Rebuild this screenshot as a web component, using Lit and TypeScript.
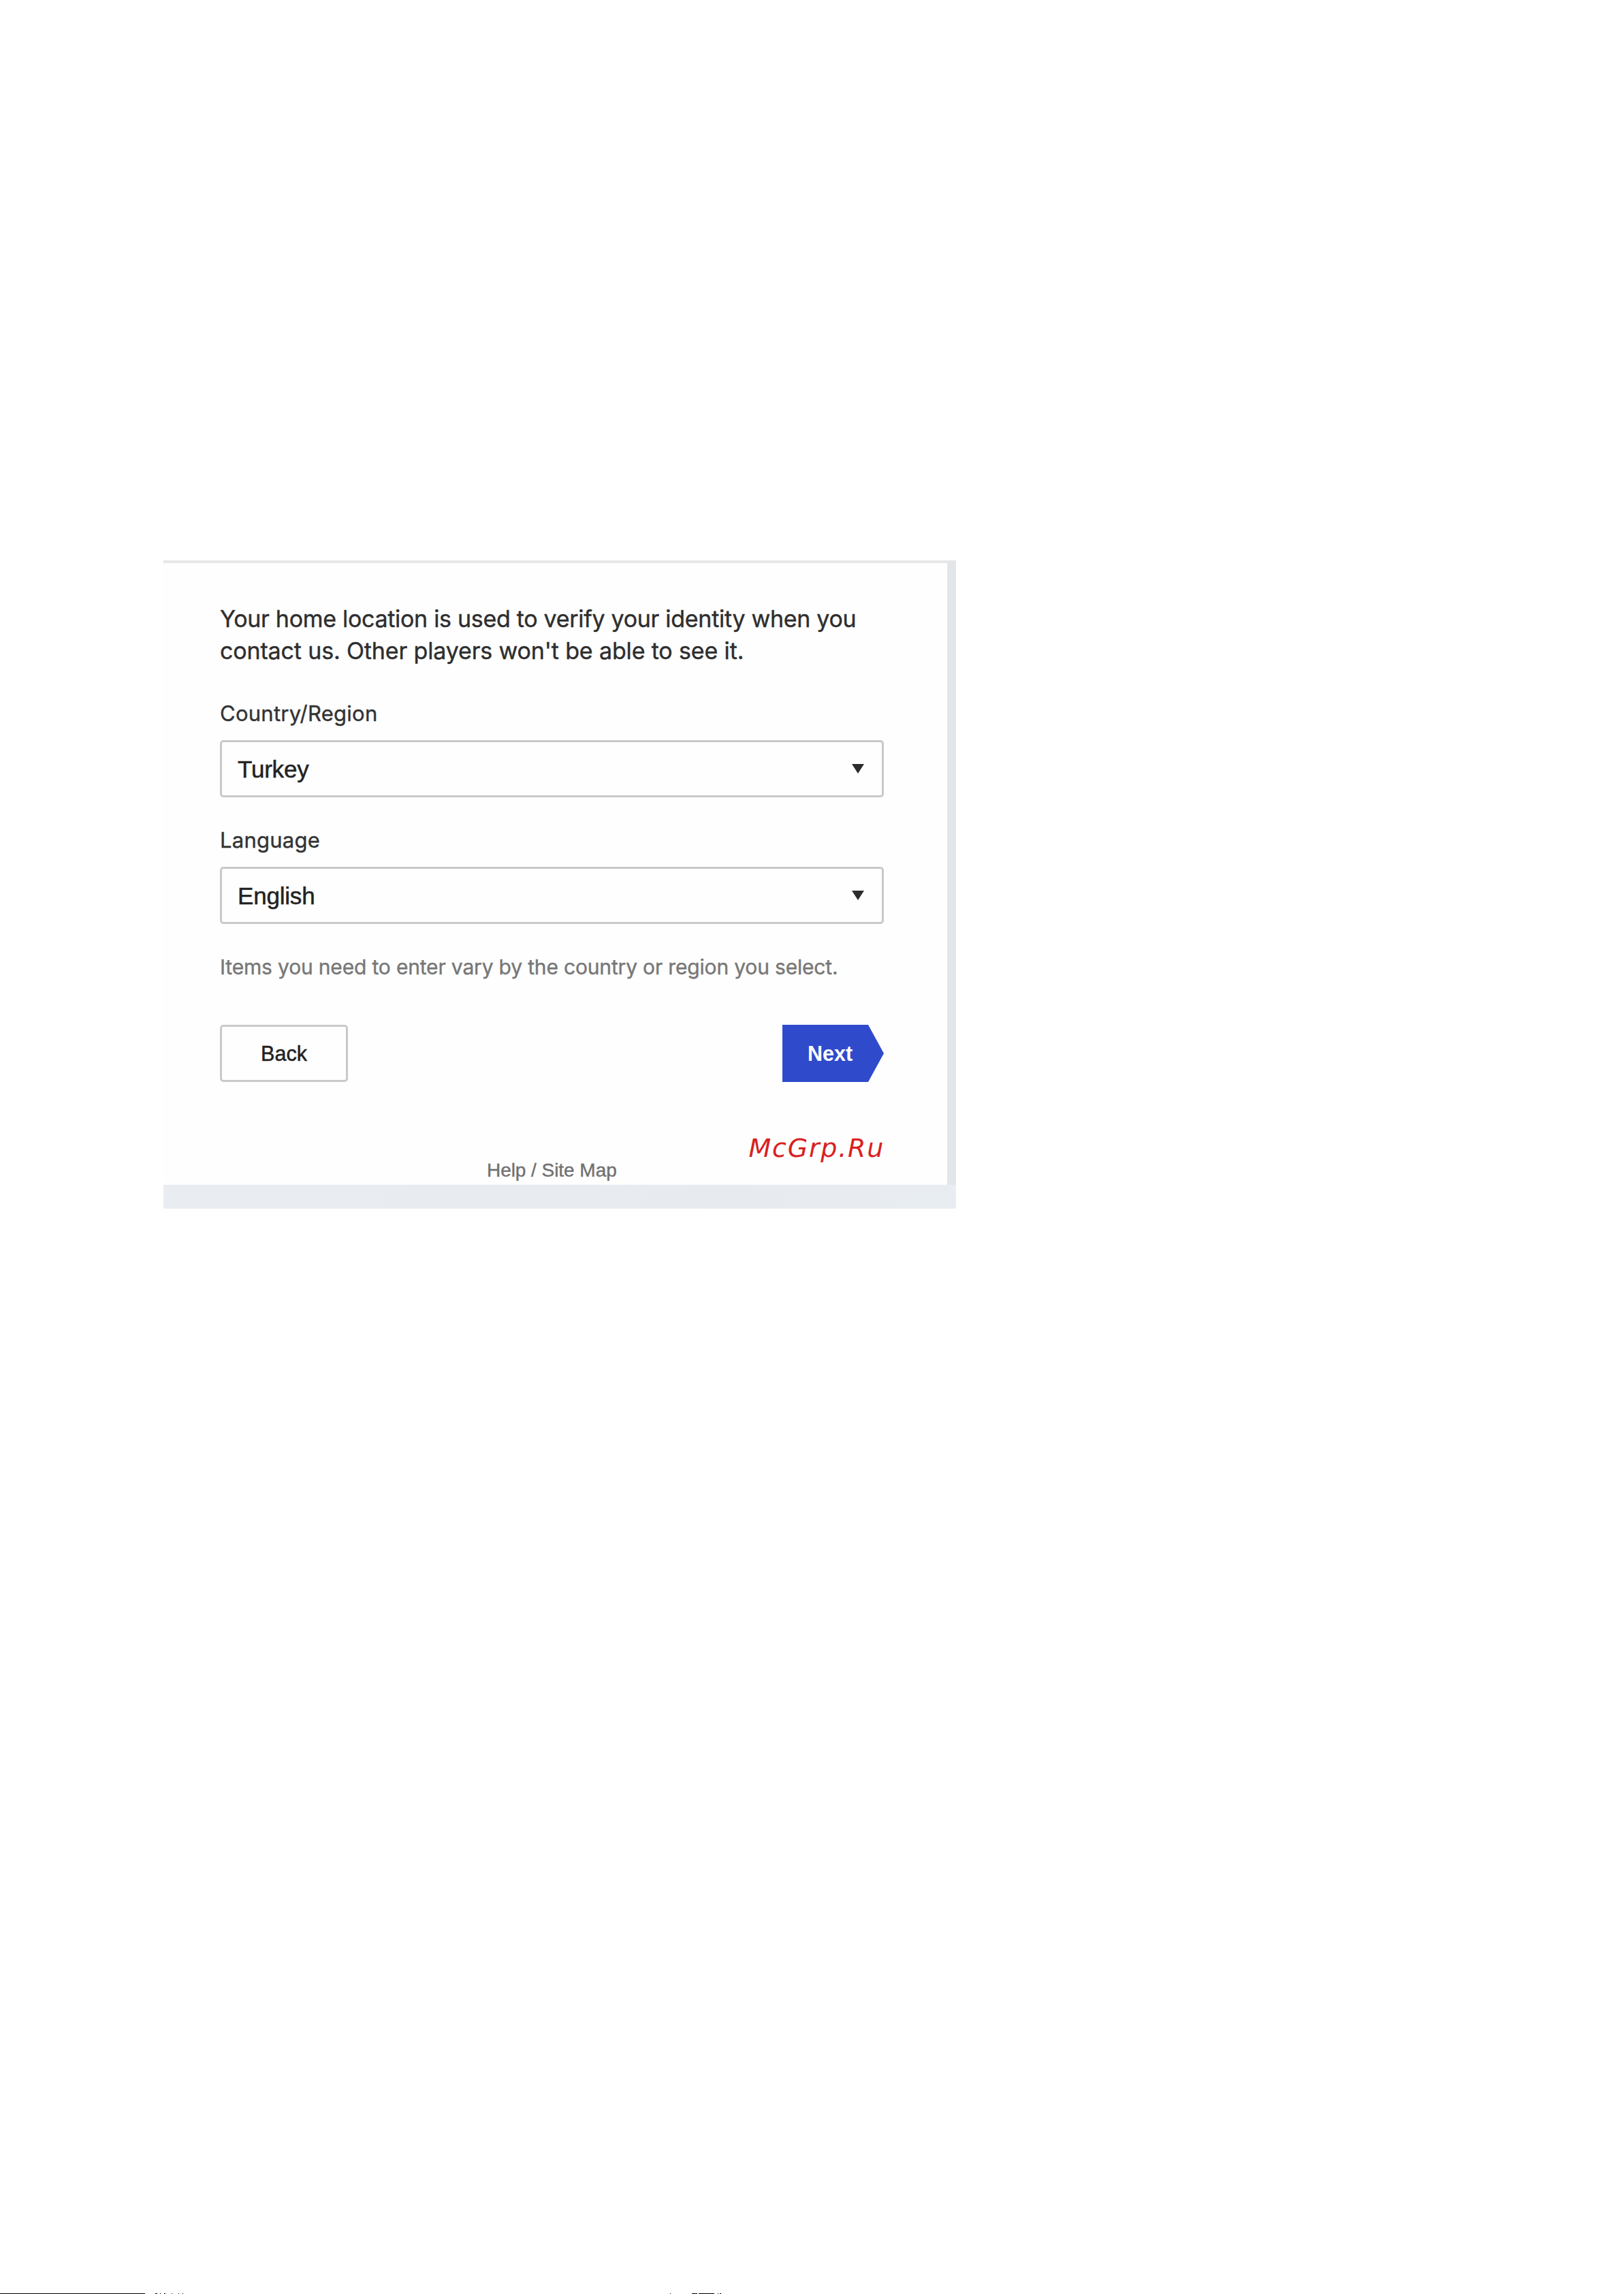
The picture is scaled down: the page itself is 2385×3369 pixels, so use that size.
import { LitElement, html, css } from 'lit';
import { customElement, property } from 'lit/decorators.js';

@customElement('select-field')
export class SelectField extends LitElement {
  @property() label = '';
  @property() value = '';

  static styles = css`
    :host {
      display: block;
    }

    .label {
      color: #333;
      font: 31px/40px Inter, sans-serif;
      letter-spacing: 0.25px;
      -webkit-text-stroke: 0.4px #333;
    }

    .select {
      display: flex;
      align-items: center;
      justify-content: space-between;
      box-sizing: border-box;
      height: 84px;
      margin-top: 19px;
      padding: 0 26px 0 23px;
      border: 3px solid #c9c9c9;
      border-radius: 5px;
      color: #222;
      font: 35px/40px 'Liberation Sans', Arial, sans-serif;
      letter-spacing: -0.2px;
      -webkit-text-stroke: 0.5px #222;
    }

    .value {
      padding-top: 2px;
    }

    .arrow {
      display: block;
      width: 18px;
      height: 14px;
      fill: #2c2c2c;
      stroke: none;
    }
  `;

  render() {
    return html`
      <div class="label">${this.label}</div>
      <div class="select">
        <span class="value">${this.value}</span>
        <svg class="arrow" viewBox="0 0 18 14"><path d="M0 0h18L9 14z" /></svg>
      </div>
    `;
  }
}

@customElement('app-root')
export class AppRoot extends LitElement {
  static styles = css`
    :host {
      display: flex;
      flex-direction: column;
      justify-content: space-between;
      box-sizing: border-box;
      height: 3369px;
      padding-top: 823px;
      background: #fff;
      overflow: hidden;
    }

    .panel {
      position: relative;
      box-sizing: border-box;
      width: 1164px;
      height: 952px;
      margin-left: 240px;
      padding: 4px 13px 35px 0;
      background: linear-gradient(75deg, #e9edf2, #e7ebef 60%, #e9eef2 97.5%, #e3e7ea 98%);
    }

    /* side and top edges are a touch darker than the bottom strip */
    .panel::before {
      content: '';
      position: absolute;
      inset: 0 0 35px 0;
      background: linear-gradient(#e5e7e7 4px, #e2e6e9 4px);
    }

    .card {
      position: relative;
      box-sizing: border-box;
      height: 913px;
      padding: 59px 93px 0 83px;
      background: #fefefe;
    }

    .intro {
      margin: 0 0 49px;
      color: #2e2e2e;
      font: 34px/46.5px Inter, sans-serif;
      white-space: nowrap;
      -webkit-text-stroke: 0.4px #2e2e2e;
    }

    .line {
      display: block;
      letter-spacing: -0.3px;
    }

    .line + .line {
      letter-spacing: -0.15px;
    }

    .language {
      margin-top: 43px;
    }

    .note {
      margin: 43px 0 65px;
      color: #777;
      font: 30px/40px Inter, sans-serif;
      letter-spacing: -0.17px;
      white-space: nowrap;
      -webkit-text-stroke: 0.4px #777;
    }

    .buttons {
      display: flex;
      justify-content: space-between;
    }

    .button {
      display: flex;
      align-items: center;
      justify-content: center;
      box-sizing: border-box;
      height: 84px;
      font: 30.5px/40px 'Liberation Sans', Arial, sans-serif;
    }

    .back {
      width: 188px;
      border: 3px solid #c9c9c9;
      border-radius: 5px;
      color: #222;
      -webkit-text-stroke: 0.5px #222;
    }

    .next {
      width: 149px;
      padding-right: 9px;
      background: #2f4bcb;
      clip-path: polygon(0 0, 126px 0, 100% 50%, 126px 100%, 0 100%);
      color: #fff;
      font-weight: bold;
    }

    .footer {
      width: max-content;
      margin: 112px 0 0 392px;
      color: #707070;
      font: 28px/36px 'Liberation Sans', Arial, sans-serif;
      letter-spacing: -0.05px;
      -webkit-text-stroke: 0.4px #707070;
    }

    .watermark {
      position: absolute;
      top: 841px;
      right: 105px;
      color: #d92020;
      font: italic 38px/44px 'DejaVu Sans', Verdana, sans-serif;
      letter-spacing: 1.75px;
    }

    .page-edge {
      display: block;
      width: 1060px;
      height: 1px;
    }
  `;

  render() {
    return html`
      <div class="panel">
        <div class="card">
          <p class="intro">
            <span class="line">Your home location is used to verify your identity when you</span>
            <span class="line">contact us. Other players won't be able to see it.</span>
          </p>
          <select-field label="Country/Region" value="Turkey"></select-field>
          <select-field class="language" label="Language" value="English"></select-field>
          <p class="note">Items you need to enter vary by the country or region you select.</p>
          <div class="buttons">
            <div class="button back">Back</div>
            <div class="button next">Next</div>
          </div>
          <div class="footer">Help / Site Map</div>
        </div>
        <div class="watermark">McGrp.Ru</div>
      </div>
      <svg class="page-edge" viewBox="0 0 1060 1" shape-rendering="crispEdges">
        <path d="M0 0h213v1H0zM228 0h3v1h-3zM235 0h1v1h-1zM241 0h2v1h-2zM252 0h1v1h-1zM262 0h1v1h-1zM268 0h1v1h-1zM984 0h1v1h-1zM1016 0h8v1h-8zM1026 0h23v1h-23zM1054 0h1v1h-1zM1057 0h2v1h-2z" />
      </svg>
    `;
  }
}

declare global {
  interface HTMLElementTagNameMap {
    'select-field': SelectField;
    'app-root': AppRoot;
  }
}
